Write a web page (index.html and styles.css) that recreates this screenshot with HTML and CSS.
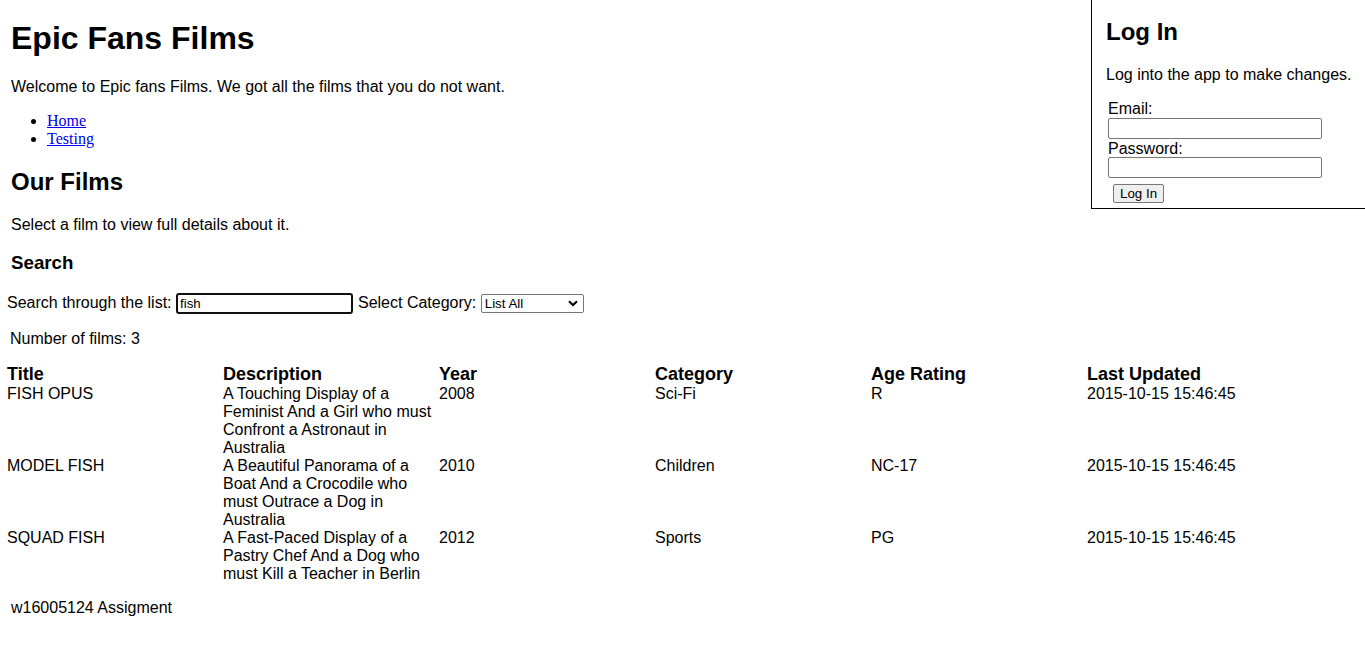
FILE: index.html
```html
<!DOCTYPE html>
<html lang="en">
<head>
<meta charset="utf-8">
<title>Epic Fans Films</title>
<link rel="stylesheet" href="styles.css">
</head>
<body>
<main class="page">
  <h1 class="title">Epic Fans Films</h1>
  <p class="text">Welcome to Epic fans Films. We got all the films that you do not want.</p>
  <ul class="nav">
    <li><a href="#">Home</a></li>
    <li><a href="#">Testing</a></li>
  </ul>
  <h2 class="section-title">Our Films</h2>
  <p class="text">Select a film to view full details about it.</p>
  <h3 class="sub-title">Search</h3>
  <form class="search-row">
    <label class="search-label">Search through the list: <input class="search-input" type="text" value="fish"></label>
    <label class="search-label">Select Category: <span class="select-wrap"><select class="category-select"><option>List All</option></select><svg class="chevron" width="10" height="7" viewBox="0 0 10 7"><path d="M1 1.2 L5 5 L9 1.2" fill="none" stroke="#000" stroke-width="2"/></svg></span></label>
  </form>
  <p class="count">Number of films: 3</p>
  <table class="films">
    <thead>
      <tr><th>Title</th><th>Description</th><th>Year</th><th>Category</th><th>Age Rating</th><th>Last Updated</th></tr>
    </thead>
    <tbody>
      <tr><td>FISH OPUS</td><td>A Touching Display of a Feminist And a Girl who must Confront a Astronaut in Australia</td><td>2008</td><td>Sci-Fi</td><td>R</td><td>2015-10-15 15:46:45</td></tr>
      <tr><td>MODEL FISH</td><td>A Beautiful Panorama of a Boat And a Crocodile who must Outrace a Dog in Australia</td><td>2010</td><td>Children</td><td>NC-17</td><td>2015-10-15 15:46:45</td></tr>
      <tr><td>SQUAD FISH</td><td>A Fast-Paced Display of a Pastry Chef And a Dog who must Kill a Teacher in Berlin</td><td>2012</td><td>Sports</td><td>PG</td><td>2015-10-15 15:46:45</td></tr>
    </tbody>
  </table>
  <p class="text footer">w16005124 Assigment</p>
</main>
<aside class="login">
  <h2 class="login-title">Log In</h2>
  <p class="login-text">Log into the app to make changes.</p>
  <form class="login-form">
    <label class="field-label">Email:</label>
    <input class="field-input" type="text">
    <label class="field-label">Password:</label>
    <input class="field-input" type="password">
    <button class="login-button" type="button">Log In</button>
  </form>
</aside>
</body>
</html>
```
FILE: styles.css
```css
html, body {
  margin: 0;
  padding: 0;
  background: #fff;
}
body {
  font-family: "Liberation Sans", Arial, sans-serif;
  font-size: 16px;
  color: #000;
  position: relative;
}
.page {
  padding-left: 7px;
  padding-top: 0.1px;
}
.title {
  font-size: 32px;
  font-weight: bold;
  margin: 19.6px 0 21.24px 4px;
}
.text {
  margin: 16px 0 16px 4px;
}
.nav {
  margin: 16px 0;
  padding-left: 40px;
  font-family: "Liberation Serif", "Times New Roman", serif;
}
.nav a {
  color: #0000ee;
}
.section-title {
  font-size: 24px;
  margin: 19.92px 0 19.92px 4px;
}
.sub-title {
  font-size: 18.72px;
  margin: 18.72px 0 17.72px 4px;
}
.search-row {
  margin: 17.72px 0 0 0;
  display: flex;
  align-items: center;
  height: 22px;
}
.search-label {
  display: flex;
  align-items: center;
  white-space: pre;
}
.search-input {
  box-sizing: border-box;
  width: 177px;
  height: 21px;
  border: 2px solid #101010;
  border-radius: 3px;
  padding: 0 2px;
  margin-right: 5px;
  font-family: "Liberation Sans", Arial, sans-serif;
  font-size: 13.33px;
  outline: none;
}
.select-wrap {
  position: relative;
  display: inline-block;
  height: 19px;
}
.category-select {
  appearance: none;
  -webkit-appearance: none;
  box-sizing: border-box;
  width: 103px;
  height: 19px;
  border: 1px solid #767676;
  border-radius: 2px;
  background: #fff;
  padding: 0 3px;
  font-family: "Liberation Sans", Arial, sans-serif;
  font-size: 13.33px;
  color: #000;
}
.chevron {
  position: absolute;
  right: 6px;
  top: 6px;
  pointer-events: none;
}
.count {
  margin: 16px 0 16px 3px;
}
.films {
  border-collapse: collapse;
  table-layout: fixed;
  width: 1296px;
}
.films th,
.films td {
  width: 216px;
  padding: 0;
  text-align: left;
  vertical-align: top;
}
.films th {
  font-weight: bold;
  font-size: 18px;
  line-height: 21px;
}
.films td {
  line-height: 18px;
}
.footer {
  margin-top: 16px;
}
.login {
  position: absolute;
  top: -2px;
  left: 1091px;
  width: 276px;
  box-sizing: border-box;
  border: 1px solid #000;
  padding: 0 14px 5px 14px;
}
.login-title {
  font-size: 24px;
  margin: 18.5px 0 20.92px 0;
}
.login-text {
  margin: 16px 0 15px 0;
  white-space: nowrap;
}
.login-form {
  display: flex;
  flex-direction: column;
  align-items: flex-start;
  padding-left: 2px;
}
.field-label {
  display: block;
  line-height: 18.4px;
  margin-top: 1px;
  margin-bottom: -1px;
}
.field-input {
  box-sizing: border-box;
  width: 214px;
  height: 21px;
  border: 1px solid #767676;
  border-radius: 2px;
  padding: 1px 2px;
  font-size: 13.33px;
  margin: 0;
}
.login-button {
  box-sizing: border-box;
  margin: 6px 0 0 5px;
  height: 19px;
  padding: 0 6px;
  border: 1px solid #767676;
  border-radius: 2px;
  background: #efefef;
  font-family: "Liberation Sans", Arial, sans-serif;
  font-size: 13.33px;
  color: #000;
}
```
